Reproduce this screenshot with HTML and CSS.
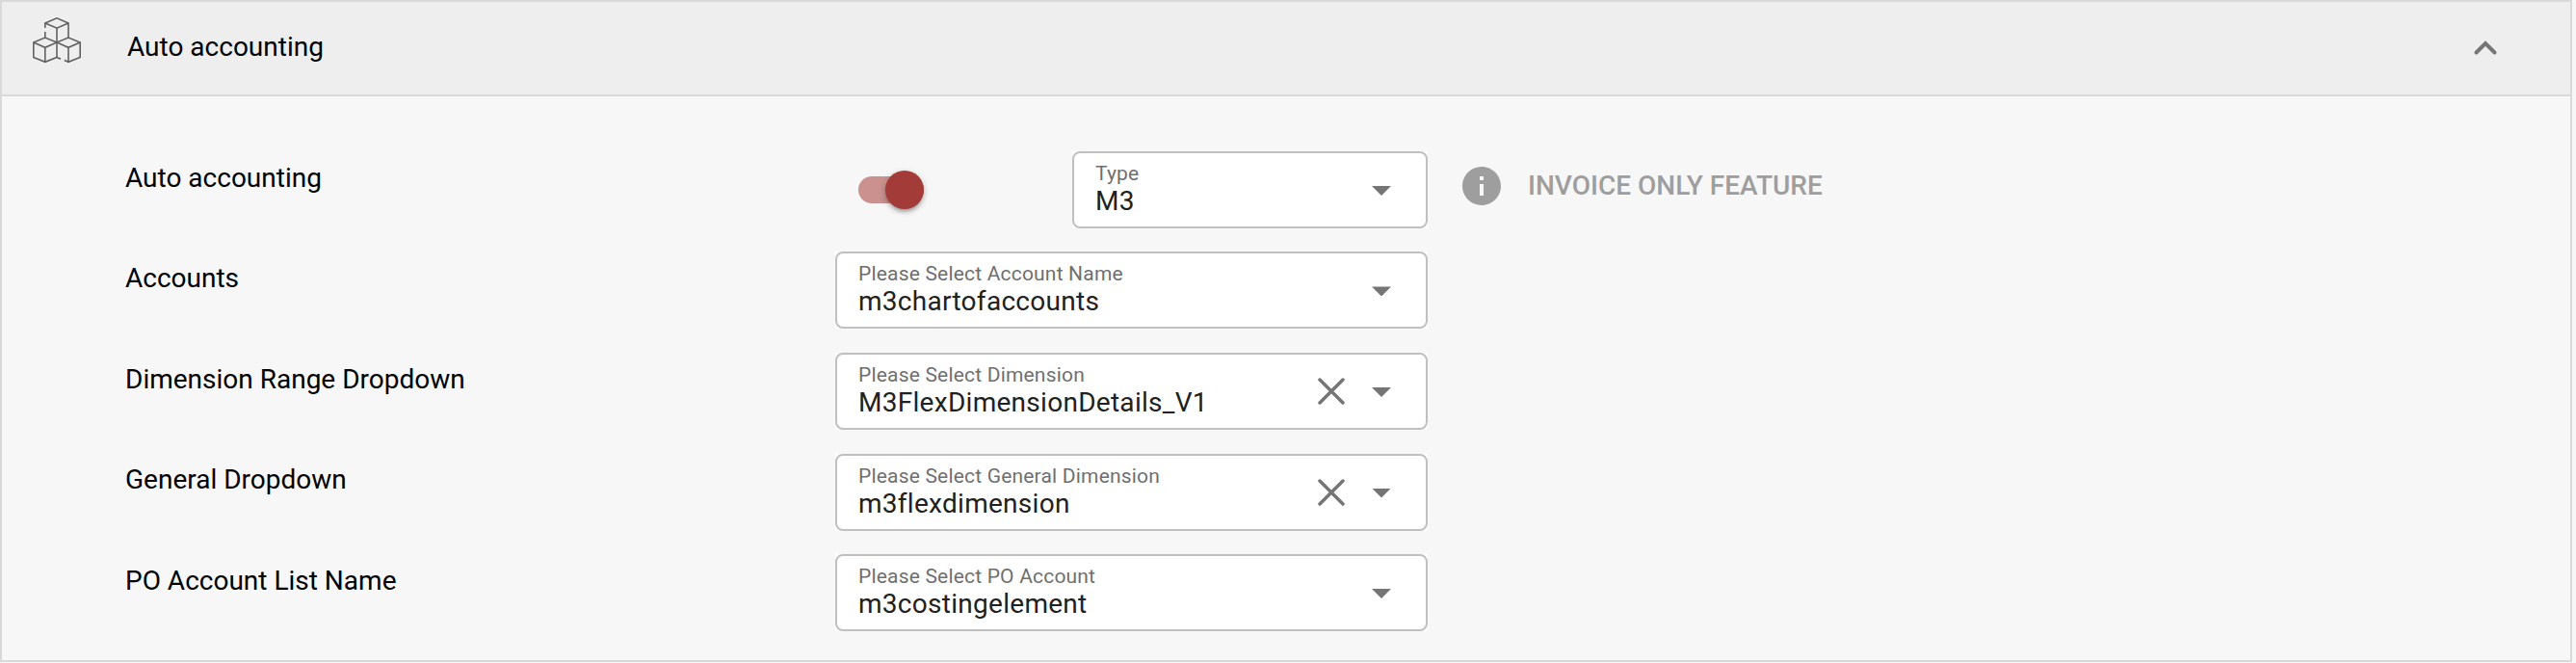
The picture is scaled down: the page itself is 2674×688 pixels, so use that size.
FILE: index.html
```html
<!DOCTYPE html>
<html lang="en">
<head>
<meta charset="utf-8">
<title>Auto accounting</title>
<link rel="stylesheet" href="styles.css">
</head>
<body>
<section class="panel">
  <header class="panel-header">
    <svg class="cubes" width="52" height="50" viewBox="33 17 52 50" fill="none" stroke="#616161" stroke-width="1.6">
      <path d="M46.8 29V24L59 18.8 71 24V39M46.8 24 59 29.2 71 24M59 29.2V60M46.8 33V39"/>
      <path d="M59 44 46.8 39 34.8 44V59.5L46.8 64.3 59 59.5M34.8 44 46.8 49.3 59 44M46.8 49.3V64.3"/>
      <path d="M59 44 71 39 83.2 44V59.5L71 64.3 66.8 62.5M59 44 71 49.3 83.2 44M71 49.3V64.3M59 59.5 63 61.2"/>
    </svg>
    <h1 class="title">Auto accounting</h1>
    <svg class="chevron" width="28" height="20" viewBox="0 0 28 20" fill="none" stroke="#757575" stroke-width="4" stroke-linecap="round"><path d="M4.500 14.500 14 5 23.500 14.500"/></svg>
  </header>
  <div class="rows">
    <div class="row">
      <div class="label">Auto accounting</div>
      <div class="control">
        <span class="switch"><span class="thumb"></span></span>
        <div class="select short">
          <div class="box"><div class="text"><div class="hint">Type</div><div class="value">M3</div></div><span class="arrow"></span></div>
        </div>
      </div>
      <div class="note">
        <svg width="40" height="40" viewBox="2 2 20 20" fill="#9e9e9e"><path d="M12 2C6.480 2 2 6.480 2 12s4.480 10 10 10 10-4.480 10-10S17.520 2 12 2zm1 15h-2v-6h2v6zm0-8h-2V7h2v2z"/></svg>
        <span class="note-text">INVOICE ONLY FEATURE</span>
      </div>
    </div>
    <div class="row">
      <div class="label">Accounts</div>
      <div class="select">
        <div class="box"><div class="text"><div class="hint">Please Select Account Name</div><div class="value">m3chartofaccounts</div></div><span class="arrow"></span></div>
      </div>
    </div>
    <div class="row">
      <div class="label">Dimension Range Dropdown</div>
      <div class="select">
        <div class="box"><div class="text"><div class="hint">Please Select Dimension</div><div class="value">M3FlexDimensionDetails_V1</div></div><svg class="clear" width="28" height="28" viewBox="0 0 28 28" stroke="#757575" stroke-width="3.500" stroke-linecap="round"><path d="M2 2 26 26M26 2 2 26"/></svg><span class="arrow"></span></div>
      </div>
    </div>
    <div class="row">
      <div class="label">General Dropdown</div>
      <div class="select">
        <div class="box"><div class="text"><div class="hint">Please Select General Dimension</div><div class="value">m3flexdimension</div></div><svg class="clear" width="28" height="28" viewBox="0 0 28 28" stroke="#757575" stroke-width="3.500" stroke-linecap="round"><path d="M2 2 26 26M26 2 2 26"/></svg><span class="arrow"></span></div>
      </div>
    </div>
    <div class="row">
      <div class="label">PO Account List Name</div>
      <div class="select">
        <div class="box"><div class="text"><div class="hint">Please Select PO Account</div><div class="value">m3costingelement</div></div><span class="arrow"></span></div>
      </div>
    </div>
  </div>
</section>
</body>
</html>
```
FILE: styles.css
```css
* { box-sizing: border-box; }
body {
  margin: 0;
  height: 688px;
  overflow: hidden;
  background: #f7f7f7;
  font-family: Roboto, sans-serif;
  font-size: 28px;
  line-height: 33px;
  color: #000;
}
.panel {
  width: 2670px;
  height: 687px;
  border: 2px solid #d9d9d9;
  background: #f7f7f7;
}
.panel-header {
  display: flex;
  align-items: flex-start;
  height: 98px;
  padding-left: 31px;
  padding-right: 74px;
  background: #eee;
  border-bottom: 2px solid #d9d9d9;
}
.cubes { margin-top: 15px; }
.title {
  flex: 1;
  margin: 30px 0 0 47px;
  font-size: 28px;
  font-weight: 400;
  line-height: 33px;
}
.chevron { margin-top: 38px; }
.rows {
  display: flex;
  flex-direction: column;
  gap: 24.550px;
  padding: 56.900px 0 0 128px;
}
.row {
  display: grid;
  grid-template-columns: 737px 615px auto;
  height: 80px;
}
.label { padding-top: 10.800px; }
.control {
  display: flex;
  justify-content: space-between;
  padding-left: 24px;
}
.switch {
  display: flex;
  align-items: center;
  justify-content: flex-end;
  width: 68px;
  height: 28px;
  margin-top: 26px;
  border-radius: 14px;
  background: #ca918e;
}
.thumb {
  width: 40px;
  height: 40px;
  border-radius: 50%;
  background: #a33c38;
  box-shadow: 0 4px 4px -2px rgba(0,0,0,.25), 0 2px 6px rgba(0,0,0,.25);
}
.select { height: 80px; background: #fff; }
.short { width: 369px; }
.box {
  display: flex;
  height: 80px;
  padding: 9px 36px 0 22px;
  border: 2px solid #c0c0c0;
  border-radius: 8px;
}
.text {
  flex: 1;
  color: #212121;
  letter-spacing: .280px;
}
.hint {
  font-size: 21px;
  line-height: 24px;
  letter-spacing: .190px;
  color: #6f6f6f;
}
.clear { margin: 15px 28px 0 0; }
.arrow {
  width: 20px;
  height: 10px;
  margin-top: 25px;
  background: #757575;
  clip-path: polygon(0 0, 100% 0, 50% 100%);
}
.note {
  display: flex;
  gap: 28px;
  padding: 16px 0 0 36px;
  color: #9e9e9e;
  font-weight: 500;
}
.note-text { padding-top: 3px; }
```
